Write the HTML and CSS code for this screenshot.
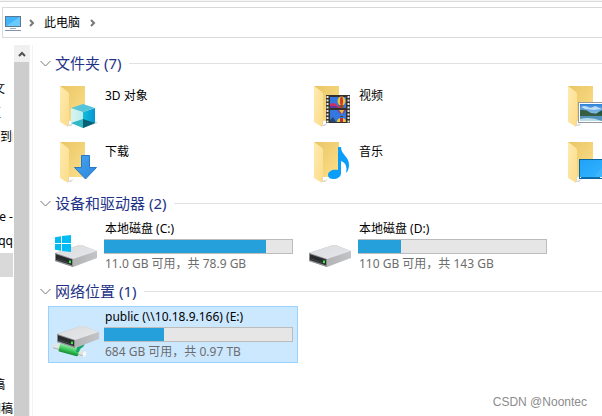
FILE: index.html
```html
<!DOCTYPE html>
<html lang="zh-CN">
<head>
<meta charset="utf-8">
<title>此电脑</title>
<link rel="stylesheet" href="styles.css">
</head>
<body>
<svg class="defs" aria-hidden="true">
  <defs>
    <linearGradient id="back" x1="0" y1="0" x2="1" y2="1"><stop offset="0" stop-color="#e9c565"/><stop offset="1" stop-color="#fde08b"/></linearGradient>
    <linearGradient id="flap" x1="0" y1="0" x2="1" y2="1"><stop offset="0" stop-color="#ffeab0"/><stop offset="1" stop-color="#fbdc89"/></linearGradient>
    <linearGradient id="top" x1="0" y1="0" x2="1" y2="1"><stop offset="0" stop-color="#dadbdd"/><stop offset="1" stop-color="#e6e7ea"/></linearGradient>
    <linearGradient id="side" x1="0" y1="0" x2="1" y2="0"><stop offset="0" stop-color="#a6a6a7"/><stop offset="1" stop-color="#c3c4c6"/></linearGradient>
    <linearGradient id="arrow" x1="0" y1="0" x2="1" y2="1"><stop offset="0" stop-color="#45a5f0"/><stop offset="1" stop-color="#2c86dc"/></linearGradient>
    <linearGradient id="screen" x1="0" y1="0" x2="1" y2="1"><stop offset="0" stop-color="#20a2f8"/><stop offset="1" stop-color="#36b6ff"/></linearGradient>
    <linearGradient id="cubeL" x1="0" y1="0" x2="1" y2="0"><stop offset="0" stop-color="#d6f5f4"/><stop offset="1" stop-color="#bdebed"/></linearGradient>
    <linearGradient id="cubeR" x1="0" y1="0" x2="1" y2="0"><stop offset="0" stop-color="#10bfd8"/><stop offset="1" stop-color="#0794d6"/></linearGradient>
    <linearGradient id="sky" x1="0" y1="0" x2="0" y2="1"><stop offset="0" stop-color="#2d83d8"/><stop offset="1" stop-color="#d6edf8"/></linearGradient>
    <linearGradient id="pipe" x1="0" y1="0" x2="0" y2="1"><stop offset="0" stop-color="#8be8a0"/><stop offset=".5" stop-color="#40c95c"/><stop offset="1" stop-color="#128b32"/></linearGradient>
    <symbol id="folder" viewBox="0 0 48 48">
      <path d="M14 44L22 41L19 44Z" fill="#d8d8d8"/>
      <path d="M8 4H33V39H8Z" fill="url(#back)"/>
      <path d="M8 4L15.500 9.500Q17 10.500 17 12V40Q17 42 15.500 44.500L8 40Z" fill="url(#flap)"/>
      <path d="M16.500 38V43L15.500 44.500" fill="none" stroke="#e8d9b0"/>
    </symbol>
    <symbol id="drive" viewBox="0 0 42 22">
      <path d="M0 8L24 0Q27-.3 29 1L42 6V13L18 22L0 16Z" fill="url(#side)"/>
      <path d="M0 8L24 0Q27-.3 29 1L42 6L18 14Z" fill="url(#top)"/>
      <path d="M0 8L18 14V22L0 16Z" fill="#8c8d8e"/>
      <path d="M1 9.300L17 14.600V20.300L1 15Z" fill="#272b2e"/>
      <path d="M2 13.500L16 18.200V19L2 14.300Z" fill="#495055"/>
      <rect x="14" y="15.500" width="2" height="2.500" fill="#36ed3b"/>
    </symbol>
  </defs>
</svg>

<header class="address">
  <svg class="pc" viewBox="0 0 16 16" aria-hidden="true">
    <rect x=".5" y="1.500" width="15" height="10" fill="#42b4fa" stroke="#5b7890"/>
    <path d="M1 11L15 2V11Z" fill="#69caff"/>
    <path d="M5 13.500H11" stroke="#9bb0be"/><path d="M0 15.500H16" stroke="#8595a5"/>
  </svg>
  <svg class="crumb" viewBox="0 0 6 8" aria-hidden="true"><path d="M1 1L4 4L1 7"/></svg>
  <a class="here" href="#pc">此电脑</a>
  <svg class="crumb" viewBox="0 0 6 8" aria-hidden="true"><path d="M1 1L4 4L1 7"/></svg>
</header>

<div class="panes">
  <nav class="tree">
    <div class="group">
      <span class="node cut-l">文</span>
      <span class="node cut-xl blue">区</span>
      <span class="node">到的</span>
    </div>
    <div class="group">
      <span class="node cut">e -</span>
      <span class="node cut">qq</span>
      <span class="node current"></span>
      <span class="node"></span>
      <span class="node"></span>
    </div>
    <div class="group">
      <span class="node cut-l">稿</span>
      <span class="node cut">间稿</span>
    </div>
  </nav>
  <div class="scroll">
    <button class="up" aria-label="向上滚动"><svg viewBox="0 0 8 6" aria-hidden="true"><path d="M1 5L4 2L7 5"/></svg></button>
    <div class="thumb"></div>
  </div>

  <main class="content" id="pc">
    <section>
      <h2><svg viewBox="0 0 11 7" aria-hidden="true"><path d="M.5 1L5.500 6L10.500 1"/></svg>文件夹 (7)</h2>
      <div class="tiles">
        <button class="tile folder">
          <svg class="icon" viewBox="0 0 48 48" aria-hidden="true"><use href="#folder"/>
            <path d="M31 46L46 41L43 39Z" fill="#ddd"/>
            <path d="M19 26L31 30V46L19 41Z" fill="url(#cubeL)"/>
            <path d="M31 30L43 26V41L31 46Z" fill="url(#cubeR)"/>
            <path d="M19 26L31 22L43 26L31 30Z" fill="#55c5dc"/>
            <path d="M19 41L31 37V46Z" fill="#32b8c6"/>
            <path d="M31 37L43 41L31 46Z" fill="#075f74"/>
          </svg><span>3D 对象</span></button>
        <button class="tile folder">
          <svg class="icon" viewBox="0 0 48 48" aria-hidden="true"><use href="#folder"/>
            <rect x="20" y="13" width="24" height="28" fill="#34302d"/>
            <path d="M21.500 14V41M42.500 14V41" stroke="#e8e8e8" stroke-width="2" stroke-dasharray="2 1.500"/>
            <path d="M24 15H40V26H24ZM24 28H40V40H24Z" fill="#3478df"/>
            <path d="M24 22Q28 19 32 24L35 26H24Z" fill="#d32e5d"/>
            <path d="M24 24Q29 23 33 26H24Z" fill="#573c9a"/>
            <ellipse cx="35.500" cy="19" rx="4" ry="4.500" fill="#f0c62d"/><ellipse cx="35.500" cy="19" rx="1.500" ry="4.500" fill="#cd3a3e"/>
            <path d="M33 23H38L37 26H34Z" fill="#a5481e"/>
            <path d="M31 28H40L37 32H34Z" fill="#7645a2"/><path d="M33 28H38L36 32Z" fill="#f2b92b"/>
            <path d="M31 40Q31 36 35.500 36T40 40Z" fill="#f0c62d"/><path d="M34 40V36H37V40Z" fill="#b92d48"/>
            <path d="M24 38L27 35L30 40H24Z" fill="#28456f"/><path d="M34 34H37V35H34Z" fill="#683720"/>
          </svg><span>视频</span></button>
        <button class="tile folder" aria-label="图片">
          <svg class="icon" viewBox="0 0 48 48" aria-hidden="true"><use href="#folder"/>
            <rect x="18.500" y="20.500" width="30" height="20" fill="#fff" stroke="#969a9e"/>
            <rect x="20" y="22" width="28" height="17" fill="url(#sky)"/>
            <path d="M21 25Q25 23 28 25T35 24L42 27L34 28L25 27Z" fill="#edf8ff" opacity=".7"/>
            <path d="M20 28Q26 27 31 31L48 33V34H20Z" fill="#355e43"/>
            <path d="M36 32Q42 27 48 27V34Z" fill="#24553d"/>
            <path d="M20 34H48V39H20Z" fill="#5294bc"/><path d="M20 37Q30 34 42 39H20Z" fill="#b9dceb"/>
          </svg></button>
        <button class="tile folder">
          <svg class="icon" viewBox="0 0 48 48" aria-hidden="true"><use href="#folder"/>
            <path d="M29.500 17.500H37.500V29.500H44.500L33.500 41L22.500 29.500H29.500Z" fill="url(#arrow)" stroke="#2a77c6"/>
          </svg><span>下载</span></button>
        <button class="tile folder">
          <svg class="icon" viewBox="0 0 48 48" aria-hidden="true"><use href="#folder"/>
            <path d="M32 9H35C35 17 43 18 43 27Q43 32 40 35Q42 25 35 23V35C35 39 31 41 27.500 41C24 41 22 39.500 22 37C22 33 27 31 32 32Z" fill="#0a9dfa"/>
          </svg><span>音乐</span></button>
        <button class="tile folder" aria-label="桌面">
          <svg class="icon" viewBox="0 0 48 48" aria-hidden="true"><use href="#folder"/>
            <rect x="19.500" y="21.500" width="30" height="19" fill="url(#screen)" stroke="#0a669d"/>
            <path d="M34 39L48 23V39Z" fill="#49bcff" opacity=".5"/>
            <path d="M20 39.500H48" stroke="#0c71b1"/><path d="M20 39.500H21M40 39.500H48" stroke="#fff"/>
          </svg></button>
      </div>
    </section>

    <section>
      <h2><svg viewBox="0 0 11 7" aria-hidden="true"><path d="M.5 1L5.500 6L10.500 1"/></svg>设备和驱动器 (2)</h2>
      <div class="tiles">
        <button class="tile">
          <svg class="icon" viewBox="0 0 48 48" aria-hidden="true"><use href="#drive" x="3" y="23" width="42" height="22"/>
            <path d="M3 15.200L9 14.300V21H3ZM10 14.100L19 13V21H10ZM3 22H9V28.700L3 27.800ZM10 22H19V30L10 28.900Z" fill="#00bcf2"/>
          </svg>
          <span class="info"><span class="name">本地磁盘 (C:)</span><span class="bar"><span class="used" style="width:86%"></span></span><span class="free">11.0 GB 可用，共 78.9 GB</span></span></button>
        <button class="tile">
          <svg class="icon" viewBox="0 0 48 48" aria-hidden="true"><use href="#drive" x="3" y="23" width="42" height="22"/></svg>
          <span class="info"><span class="name">本地磁盘 (D:)</span><span class="bar"><span class="used" style="width:23%"></span></span><span class="free">110 GB 可用，共 143 GB</span></span></button>
      </div>
    </section>

    <section>
      <h2><svg viewBox="0 0 11 7" aria-hidden="true"><path d="M.5 1L5.500 6L10.500 1"/></svg>网络位置 (1)</h2>
      <div class="tiles">
        <button class="tile selected">
          <svg class="icon" viewBox="0 0 48 48" aria-hidden="true">
            <g transform="rotate(15 17 40)"><rect x="0" y="37" width="35" height="6" rx="2" fill="#dfe6e8"/><path d="M1 42H34" stroke="#a9b5ba"/><rect x="7" y="36" width="20" height="8" rx="1" fill="url(#pipe)"/><ellipse cx="33" cy="40" rx="1.500" ry="3" fill="#f7fafa"/></g>
            <path d="M25 37L33 34L31 37Q28 38 27 42L24 42Z" fill="#16a56a"/>
            <use href="#drive" x="5" y="16" width="42" height="22"/>
          </svg>
          <span class="info"><span class="name">public (\\10.18.9.166) (E:)</span><span class="bar"><span class="used" style="width:32%"></span></span><span class="free">684 GB 可用，共 0.97 TB</span></span></button>
      </div>
    </section>
  </main>
</div>
<div class="credit">CSDN @Noontec</div>
</body>
</html>
```

FILE: styles.css
```css
* { box-sizing: border-box; }

body {
  margin: 0;
  height: 100vh;
  display: flex;
  flex-direction: column;
  overflow: hidden;
  position: relative;
  background: #fff;
  color: #000;
  border-top: 1px solid #f5f5f5;
  font: 12px/16px "Noto Sans", "Noto Sans CJK SC", sans-serif;
}

button {
  margin: 0;
  padding: 0;
  border: 0;
  background: none;
  color: inherit;
  font: inherit;
  text-align: left;
}

.defs { position: absolute; width: 0; height: 0; }

.address {
  flex: none;
  display: flex;
  align-items: center;
  height: 37px;
  padding: 6px 0 0 5px;
  border-top: 1px solid #d9d9d9;
  background:
    linear-gradient(#d9d9d9, #d9d9d9) 2px 5px / 100% 1px no-repeat,
    linear-gradient(#d9d9d9, #d9d9d9) 2px 100% / 100% 1px no-repeat,
    linear-gradient(#d9d9d9, #d9d9d9) 2px 5px / 1px 100% no-repeat;
}
.pc { width: 16px; height: 16px; }
.crumb { width: 6px; height: 8px; margin: 0 8px; }
.crumb path { fill: none; stroke: #777; stroke-width: 2; }
.here { color: #000; text-decoration: none; margin: 0 2px 0 1px; }

.panes { flex: 1; display: flex; min-height: 0; padding-top: 7px; }

.tree {
  flex: none;
  width: 13px;
  padding-top: 32px;
  overflow: hidden;
}
.group { margin-bottom: 56px; }
.group:nth-child(2) { margin-bottom: 48px; }
.node {
  display: flex;
  align-items: center;
  height: 24px;
  white-space: nowrap;
}
.cut, .cut-l, .cut-xl { justify-content: flex-end; }
.cut-l { padding-right: 8px; }
.cut-xl { padding-right: 12px; }
.blue { color: #1e3287; }
.current { background: #d9d9d9; }

.scroll {
  flex: none;
  width: 16px;
  margin-left: 1px;
  display: flex;
  flex-direction: column;
  background: #f0f0f0;
}
.up { height: 17px; display: grid; place-items: center; }
.up svg { width: 8px; height: 6px; }
.up path { fill: none; stroke: #505050; stroke-width: 2; }
.thumb { flex: 1; background: #cdcdcd; margin-right: 1px; }

.content {
  flex: 1;
  min-width: 0;
  margin-left: 2px;
  padding: 5px 0 0 7px;
  border-left: 1px solid #f3f3f3;
  overflow: hidden;
}
section { margin-bottom: 3px; }
section:first-child { margin-bottom: 0; }

h2 {
  display: flex;
  align-items: center;
  height: 26px;
  margin: 0 0 2px;
  color: #1e3287;
  font-size: 15px;
  font-weight: 400;
}
h2 svg { width: 11px; height: 7px; margin-right: 4px; }
h2 path { fill: none; stroke: #777; }
h2::after {
  content: "";
  flex: 1;
  height: 1px;
  margin-left: 8px;
  background: #e2e2e2;
}

.tiles {
  display: grid;
  grid-template-columns: repeat(3, 250px);
  column-gap: 4px;
  margin-left: 8px;
}
.tile {
  display: flex;
  min-height: 56px;
  padding: 3px;
  border: 1px solid transparent;
}
.selected { background: #cce8ff; border-color: #99d1ff; }
.icon { flex: none; width: 48px; height: 48px; margin-right: 4px; }
.folder span { margin: 6px 0 0 1px; }
.info { flex: 1; display: flex; flex-direction: column; }
.name, .free { padding-left: 1px; white-space: nowrap; }
.name { height: 17px; line-height: 14px; }
.bar {
  width: 189px;
  height: 15px;
  border: 1px solid #bcbcbc;
  border-left: 0;
  background: #e6e6e6;
}
.used { display: block; height: 100%; background: #26a0da; }
.free { margin-top: 2px; line-height: 15px; color: #6d6d6d; }

.credit {
  position: absolute;
  right: 15px;
  bottom: 6px;
  color: #8c8c8c;
  font: 12px/16px "Liberation Sans", sans-serif;
}
```
